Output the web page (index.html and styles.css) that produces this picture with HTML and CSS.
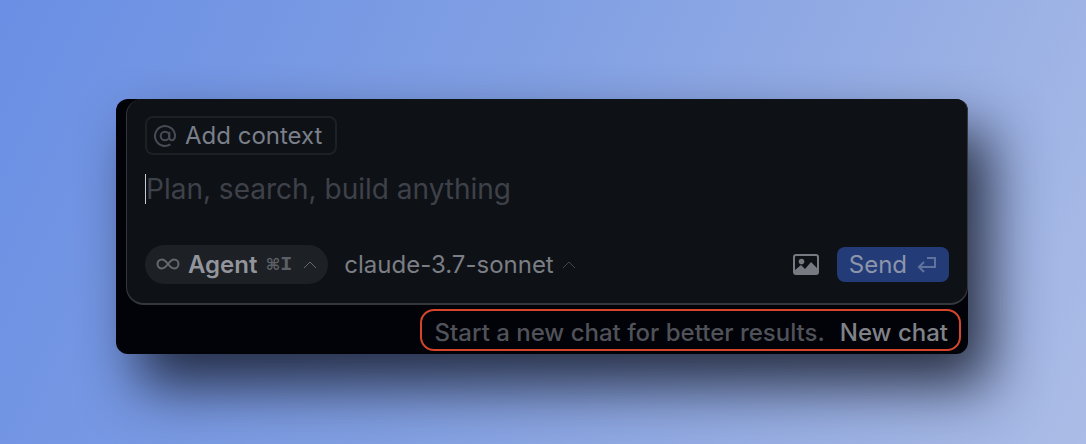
FILE: index.html
```html
<!DOCTYPE html>
<html lang="en">
<head>
<meta charset="utf-8">
<meta name="viewport" content="width=device-width, initial-scale=1">
<title>Chat composer</title>
<link rel="stylesheet" href="styles.css">
</head>
<body>
<main class="panel">
  <form class="composer">
    <button type="button" class="context">
      <svg class="icon-at" width="24" height="24" viewBox="0 0 24 24" aria-hidden="true"><circle cx="12" cy="12" r="4.3"/><path d="M16.3 7.7v5.8c0 3.8 5.7 3.8 5.7-1.5a10 10 0 1 0-4.6 8.4"/></svg>
      <span>Add context</span>
    </button>
    <input class="prompt" type="text" aria-label="Message" placeholder="Plan, search, build anything">
    <div class="toolbar">
      <button type="button" class="agent" aria-haspopup="menu">
        <svg width="24" height="14" viewBox="0 0 24 14" aria-hidden="true"><path d="M12 6C9.500 2.800 8.400 1.500 6 1.500a4.500 4.500 0 0 0 0 9c2.400 0 3.500-1.300 6-4.500s3.600-4.500 6-4.500a4.500 4.500 0 0 1 0 9c-2.400 0-3.500-1.300-6-4.500z"/></svg>
        <span class="agent-name">Agent</span>
        <kbd class="keys"><span class="cmd">⌘</span>I</kbd>
        <svg class="chevron" width="14" height="8" viewBox="0 0 14 8" aria-hidden="true"><path d="M1 7l6-6 6 6"/></svg>
      </button>
      <div class="model">
        <select class="model-select" aria-label="Model"><option>claude-3.7-sonnet</option></select>
        <svg class="chevron chevron-dim" width="14" height="8" viewBox="0 0 14 8" aria-hidden="true"><path d="M1 7l6-6 6 6"/></svg>
      </div>
      <button type="button" class="image" aria-label="Attach image">
        <svg width="26" height="22" viewBox="0 0 26 22" aria-hidden="true"><rect x="1" y="1" width="24" height="19" rx="2" fill="none" stroke="currentColor" stroke-width="2"/><circle cx="8.500" cy="7.500" r="2.800" fill="currentColor"/><path d="M2 16l6-5 4 4 6-7 7 7v4a1 1 0 0 1-1 1H2z" fill="currentColor"/></svg>
      </button>
      <button type="submit" class="send">
        <span>Send</span>
        <svg width="20" height="18" viewBox="0 0 20 18" aria-hidden="true"><path d="M10 2h8v9H2M7 6l-5 5 5 5"/></svg>
      </button>
    </div>
  </form>
  <div class="footer">
    <p class="notice"><span>Start a new chat for better results.</span><a class="new-chat" href="#">New chat</a></p>
  </div>
</main>
</body>
</html>
```
FILE: styles.css
```css
* { box-sizing: border-box; }

body {
  margin: 0;
  min-height: 100vh;
  padding: 99px 118px 90px 116px;
  background: linear-gradient(115deg, #6a8fe4 0%, #82a0e3 45%, #abbce6 100%);
  font-family: Inter, "Noto Sans", sans-serif;
  font-size: 24px;
  line-height: 30px;
  color: #7b7e84;
}

button, input, select {
  margin: 0;
  padding: 0;
  border: 0;
  background: none;
  font: inherit;
  color: inherit;
}

svg {
  flex: none;
  fill: none;
  stroke-width: 2;
}

.panel {
  border-radius: 12px;
  background: #020308;
  box-shadow: 22px 32px 56px rgba(20, 25, 40, 0.85);
}

.composer {
  display: flex;
  flex-direction: column;
  align-items: flex-start;
  margin-left: 10px;
  padding: 17px 18px 19px;
  border: solid #34383d;
  border-width: 0 1px 2px;
  border-radius: 16px 12px 18px 18px;
  background: #0e1116;
}

.context {
  display: flex;
  align-items: center;
  gap: 8px;
  height: 39px;
  padding: 0 13px 0 6px;
  border: 2px solid #1d2025;
  border-radius: 8px;
  color: #7a7f89;
}

.icon-at { stroke: #474b54; }

.prompt {
  width: 100%;
  height: 40px;
  margin: 14px 0 36px;
  padding-left: 1px;
  background: linear-gradient(#c8cbd0, #c8cbd0) left center / 1px 30px no-repeat;
  font-size: 28px;
  line-height: 40px;
  outline: 0;
}

.prompt::placeholder {
  color: #3e4149;
  opacity: 1;
}

.toolbar {
  display: flex;
  align-items: center;
  width: 100%;
}

.agent {
  display: flex;
  align-items: center;
  gap: 8px;
  height: 39px;
  padding: 0 11px;
  border-radius: 20px;
  background: #1d2025;
  stroke: #65686e;
}

.agent-name {
  font-weight: 600;
  color: #92959c;
}

.keys {
  display: flex;
  align-items: center;
  margin-right: 3px;
  font: bold 20px "Liberation Mono", monospace;
  color: #5c6066;
}

.cmd { font: bold 16px "DejaVu Sans", sans-serif; }

.chevron { stroke: #65686e; stroke-width: 1; }

.chevron-dim { stroke: #43464c; }

.model {
  display: flex;
  align-items: center;
  gap: 8px;
  margin-left: 16px;
}

.model-select { appearance: none; }

.image {
  display: flex;
  margin-left: auto;
  color: #777a80;
}

.send {
  display: flex;
  align-items: center;
  gap: 10px;
  height: 35px;
  margin-left: 18px;
  padding: 0 12px;
  border-radius: 8px;
  background: #233c78;
  color: #8c95aa;
  stroke: #60739e;
}

.footer {
  display: flex;
  justify-content: flex-end;
  padding: 4px 7px 3px;
}

.notice {
  display: flex;
  gap: 15px;
  margin: 0;
  padding: 7px 11px 1px 13px;
  border: 2px solid #d6452b;
  border-radius: 14px;
  font-weight: 500;
  color: #505259;
}

.new-chat {
  color: #808288;
  text-decoration: none;
}
```
